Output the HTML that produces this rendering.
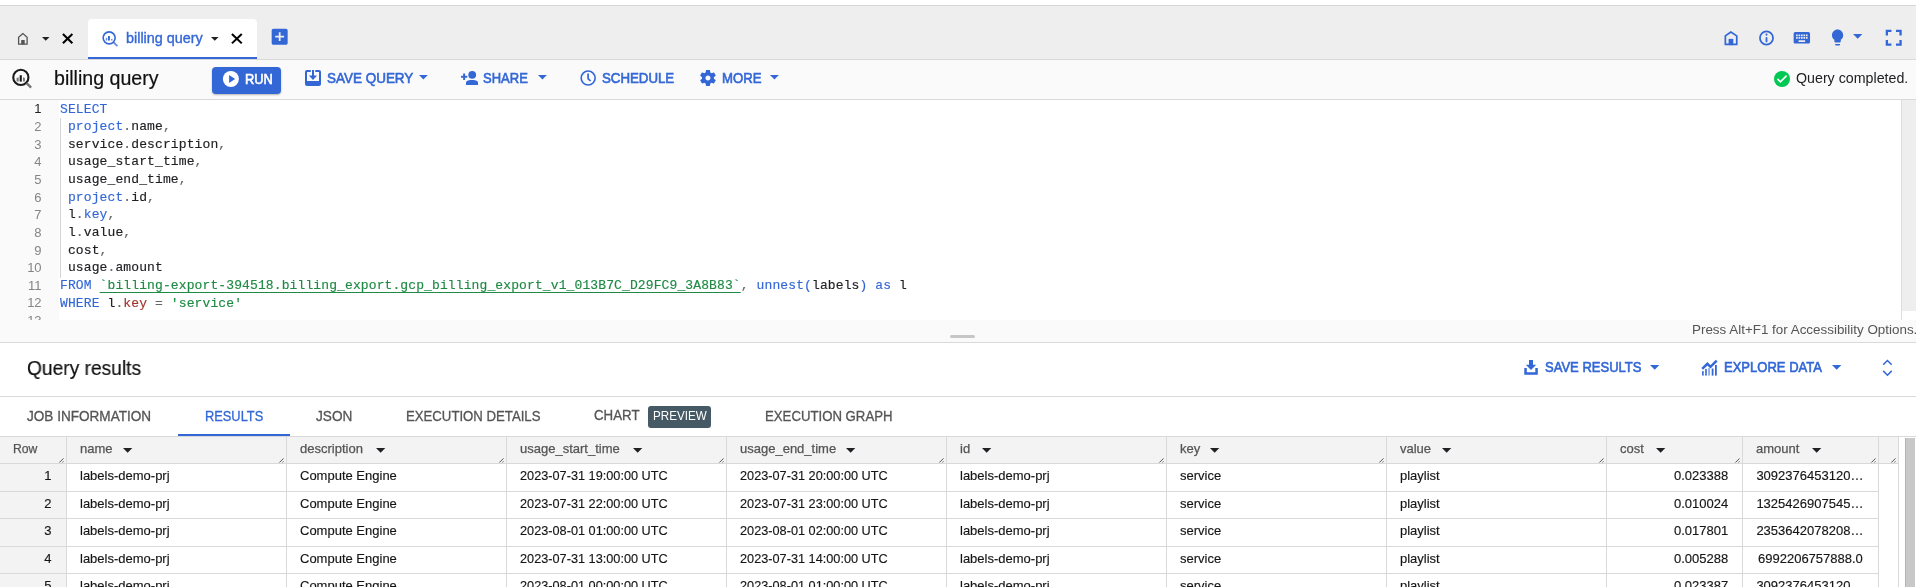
<!DOCTYPE html>
<html><head><meta charset="utf-8">
<style>
*{box-sizing:border-box;margin:0;padding:0}
html,body{width:1916px;height:587px;overflow:hidden;background:#fff;font-family:"Liberation Sans",sans-serif;color:#202124;position:relative;-webkit-font-smoothing:antialiased}
.a{position:absolute;white-space:nowrap}
svg{position:absolute;display:block;overflow:visible}
.mono{font-family:"Liberation Mono",monospace;white-space:pre}
.kw{color:#3367d6}
.str{color:#1e8a44}
.p{color:#666}
.fld{color:#a1342b}
</style></head>
<body>

<div style="position:absolute;left:0;top:0;width:1916px;height:587px;will-change:transform">
<div class="a" style="left:0px;top:0px;width:1916px;height:5px;background:#ffffff;"></div>
<div class="a" style="left:0px;top:5px;width:1916px;height:1px;background:#d4d6da;"></div>
<div class="a" style="left:0px;top:6px;width:1916px;height:53px;background:#eeeeee;"></div>
<div class="a" style="left:0px;top:59px;width:1916px;height:1px;background:#d9d9d9;"></div>
<svg style="left:12.00px;top:28.00px;width:22.00px;height:22.00px" viewBox="0 0 22 22" fill="none" ><path d="M10.9 5.6 L6.6 9.2 V16.1 H15.1 V9.2 Z" fill="none" stroke="#555" stroke-width="1.3" stroke-linejoin="miter"/><rect x="9.2" y="12" width="3.5" height="4.4" fill="#555"/></svg>
<svg style="left:41.20px;top:35.70px;width:9.50px;height:5.75px" viewBox="-1 -1 9.5 5.75" fill="#202124" ><path d="M0 0H7.5L3.75 3.75Z"/></svg>
<svg style="left:62.30px;top:33.30px;width:11.30px;height:11.20px" viewBox="0 0 11.299999999999997 11.200000000000003" fill="none" ><path d="M0.9225 0.9225L10.377499999999998 10.277500000000003M10.377499999999998 0.9225L0.9225 10.277500000000003" stroke="#000" stroke-width="2.05" fill="none"/></svg>
<div class="a" style="left:88px;top:19px;width:169px;height:40px;background:#ffffff;border-radius:4px 4px 0 0"></div>
<div class="a" style="left:88px;top:57px;width:169px;height:2px;background:#3367d6;"></div>
<svg style="left:0.00px;top:0.00px;width:1916.00px;height:587.00px" viewBox="0 0 1916 587" fill="none" ><circle cx="109.15" cy="37.85" r="6.0" fill="none" stroke="#3367d6" stroke-width="1.6"/><path d="M113.75 42.45 L117.45 46.150000000000006" stroke="#3367d6" stroke-width="2" opacity="0.7"/><rect x="108.0" y="36.0" width="1.9" height="4.5" fill="#3367d6"/><rect x="105.80000000000001" y="37.800000000000004" width="1.4" height="2.7" fill="#3367d6" opacity="0.75"/><rect x="111.10000000000001" y="38.9" width="1.4" height="1.6" fill="#3367d6" opacity="0.75"/></svg>
<div class="a" style="left:126.00px;top:31.05px;font-size:14px;line-height:14px;color:#3367d6;-webkit-text-stroke-width:0.35px;transform:scaleX(1.0280);transform-origin:0 0;">billing query</div>
<svg style="left:210.00px;top:36.00px;width:9.60px;height:5.80px" viewBox="-1 -1 9.6 5.8" fill="#202124" ><path d="M0 0H7.6L3.8 3.8Z"/></svg>
<svg style="left:231.00px;top:33.40px;width:11.70px;height:11.30px" viewBox="0 0 11.699999999999989 11.300000000000004" fill="none" ><path d="M0.9225 0.9225L10.77749999999999 10.377500000000005M10.77749999999999 0.9225L0.9225 10.377500000000005" stroke="#000" stroke-width="2.05" fill="none"/></svg>
<svg style="left:269.33px;top:26.33px;width:21.34px;height:21.34px" viewBox="0 0 24 24" fill="#3367d6" ><path d="M19 3H5c-1.11 0-2 .9-2 2v14c0 1.1.89 2 2 2h14c1.1 0 2-.9 2-2V5c0-1.1-.9-2-2-2zm-2 10h-4v4h-2v-4H7v-2h4V7h2v4h4v2z"/></svg>
<svg style="left:1720.00px;top:26.00px;width:22.00px;height:22.00px" viewBox="0 0 22 22" fill="none" ><path d="M10.9 6 L5.35 9.9 V18.45 H16.75 V9.9 Z" fill="none" stroke="#3367d6" stroke-width="1.7"/><rect x="8.6" y="12.9" width="4.7" height="6.2" fill="#3367d6"/></svg>
<svg style="left:0.00px;top:0.00px;width:1916.00px;height:587.00px" viewBox="0 0 1916 587" fill="none" ><circle cx="1766.5" cy="37.95" r="6.55" fill="none" stroke="#3367d6" stroke-width="1.75"/><circle cx="1766.5" cy="34.6" r="1.05" fill="#3367d6"/><rect x="1765.6" y="36.9" width="1.8" height="5.4" rx="0.9" fill="#3367d6"/></svg>
<svg style="left:1792.16px;top:28.20px;width:19.68px;height:19.68px" viewBox="0 0 24 24" fill="#3367d6" ><path d="M20 5H4c-1.1 0-1.99.9-1.99 2L2 17c0 1.1.9 2 2 2h16c1.1 0 2-.9 2-2V7c0-1.1-.9-2-2-2zm-9 3h2v2h-2V8zm0 3h2v2h-2v-2zM8 8h2v2H8V8zm0 3h2v2H8v-2zm-1 2H5v-2h2v2zm0-3H5V8h2v2zm9 7H8v-2h8v2zm0-4h-2v-2h2v2zm0-3h-2V8h2v2zm3 3h-2v-2h2v2zm0-3h-2V8h2v2z"/></svg>
<svg style="left:1828.00px;top:27.60px;width:19.20px;height:19.20px" viewBox="0 0 24 24" fill="#3367d6" ><path d="M9 21c0 .55.45 1 1 1h4c.55 0 1-.45 1-1v-1H9v1zm3-19C8.14 2 5 5.14 5 9c0 2.38 1.19 4.47 3 5.74V17c0 .55.45 1 1 1h6c.55 0 1-.45 1-1v-2.26c1.81-1.27 3-3.36 3-5.74 0-3.86-3.14-7-7-7z"/></svg>
<svg style="left:1852.30px;top:33.00px;width:11.40px;height:6.70px" viewBox="-1 -1 11.4 6.7" fill="#3367d6" ><path d="M0 0H9.4L4.7 4.7Z"/></svg>
<svg style="left:1880.29px;top:24.18px;width:27.43px;height:27.43px" viewBox="0 0 24 24" fill="#3367d6" ><path d="M7 14H5v5h5v-2H7v-3zm-2-4h2V7h3V5H5v5zm12 7h-3v2h5v-5h-2v3zM14 5v2h3v3h2V5h-5z"/></svg>
<div class="a" style="left:0px;top:60px;width:1916px;height:39px;background:#fafafa;"></div>
<div class="a" style="left:0px;top:99px;width:1916px;height:1px;background:#d9d9d9;"></div>
<svg style="left:0.00px;top:0.00px;width:1916.00px;height:587.00px" viewBox="0 0 1916 587" fill="none" ><circle cx="20.85" cy="77.4" r="7.6" fill="none" stroke="#1a1a1a" stroke-width="2.1"/><path d="M26.55 83.10000000000001 L31.150000000000002 87.7" stroke="#777" stroke-width="2.5"/><rect x="19.700000000000003" y="75.2" width="2.1" height="6.4" fill="#1a1a1a"/><path d="M16.6 78.0 L18.700000000000003 77.30000000000001 V81.60000000000001 H16.6 Z" fill="#777"/><path d="M23.0 77.30000000000001 L24.900000000000002 78.0 V81.60000000000001 H23.0 Z" fill="#777"/></svg>
<div class="a" style="left:53.80px;top:68.07px;font-size:20px;line-height:20px;color:#111;-webkit-text-stroke-width:0.2px;transform:scaleX(0.9800);transform-origin:0 0;">billing query</div>
<div class="a" style="left:212px;top:67px;width:69px;height:27px;background:#3367d6;border-radius:4px;box-shadow:0 1px 2px rgba(0,0,0,.28)"></div>
<svg style="left:0.00px;top:0.00px;width:1916.00px;height:587.00px" viewBox="0 0 1916 587" fill="none" ><circle cx="230.9" cy="79" r="8" fill="#fff"/><path d="M229.1 75.1 L235.1 79 L229.1 82.9 Z" fill="#3367d6"/></svg>
<div class="a" style="left:244.50px;top:71.95px;font-size:14px;line-height:14px;color:#fff;-webkit-text-stroke-width:0.6px;transform:scaleX(0.9170);transform-origin:0 0;">RUN</div>
<svg style="left:305.00px;top:70.00px;width:16.00px;height:16.00px" viewBox="0 0 16 16" fill="#3367d6" ><path fill-rule="evenodd" d="M2 0H5.8V2H2V11H14V2H10.3V0H14A2 2 0 0 1 16 2V14A2 2 0 0 1 14 16H2A2 2 0 0 1 0 14V2A2 2 0 0 1 2 0Z"/><rect x="7" y="0" width="2" height="6.4"/><path d="M3.9 5.6H12.1L8 10.1Z"/></svg>
<div class="a" style="left:327.20px;top:70.95px;font-size:14px;line-height:14px;color:#3367d6;-webkit-text-stroke-width:0.6px;transform:scaleX(0.9620);transform-origin:0 0;">SAVE QUERY</div>
<svg style="left:417.60px;top:74.30px;width:10.80px;height:6.40px" viewBox="-1 -1 10.8 6.4" fill="#3367d6" ><path d="M0 0H8.8L4.4 4.4Z"/></svg>
<svg style="left:0.00px;top:0.00px;width:1916.00px;height:587.00px" viewBox="0 0 1916 587" fill="none" ><g fill="#3367d6"><rect x="461" y="75.8" width="6.3" height="1.95"/><rect x="463.15" y="73.5" width="1.95" height="6.5"/><circle cx="472.2" cy="74.85" r="3.9"/><path d="M466 85 V82.6 C466 80.2 470 79.9 472 79.9 C474 79.9 478 80.2 478 82.6 V85 Z"/></g></svg>
<div class="a" style="left:483.40px;top:70.85px;font-size:14px;line-height:14px;color:#3367d6;-webkit-text-stroke-width:0.6px;transform:scaleX(0.9290);transform-origin:0 0;">SHARE</div>
<svg style="left:536.80px;top:74.30px;width:10.90px;height:6.45px" viewBox="-1 -1 10.9 6.45" fill="#3367d6" ><path d="M0 0H8.9L4.45 4.45Z"/></svg>
<svg style="left:0.00px;top:0.00px;width:1916.00px;height:587.00px" viewBox="0 0 1916 587" fill="none" ><circle cx="588.15" cy="78.05" r="7.0" fill="none" stroke="#3367d6" stroke-width="1.6"/><path d="M588.1 73.6 V78.6 L590.6 81" fill="none" stroke="#3367d6" stroke-width="1.7"/></svg>
<div class="a" style="left:601.70px;top:70.85px;font-size:14px;line-height:14px;color:#3367d6;-webkit-text-stroke-width:0.6px;transform:scaleX(0.9470);transform-origin:0 0;">SCHEDULE</div>
<svg style="left:698.24px;top:67.94px;width:19.92px;height:19.92px" viewBox="0 0 24 24" fill="#3367d6" ><path d="M19.14 12.94c.04-.3.06-.61.06-.94 0-.32-.02-.64-.07-.94l2.03-1.58c.18-.14.23-.41.12-.61l-1.92-3.32c-.12-.22-.37-.29-.59-.22l-2.39.96c-.5-.38-1.03-.7-1.62-.94l-.36-2.54c-.04-.24-.24-.41-.48-.41h-3.84c-.24 0-.43.17-.47.41l-.36 2.54c-.59.24-1.13.57-1.62.94l-2.39-.96c-.22-.08-.47 0-.59.22L2.74 8.87c-.12.21-.08.47.12.61l2.03 1.58c-.05.3-.09.63-.09.94s.02.64.07.94l-2.03 1.58c-.18.14-.23.41-.12.61l1.92 3.32c.12.22.37.29.59.22l2.39-.96c.5.38 1.03.7 1.62.94l.36 2.54c.05.24.24.41.48.41h3.84c.24 0 .44-.17.47-.41l.36-2.54c.59-.24 1.13-.56 1.62-.94l2.39.96c.22.08.47 0 .59-.22l1.92-3.32c.12-.22.07-.47-.12-.61l-2.01-1.58zM12 15.05c-1.68 0-3.05-1.37-3.05-3.05s1.37-3.05 3.05-3.05 3.05 1.37 3.05 3.05-1.37 3.05-3.05 3.05z"/></svg>
<div class="a" style="left:722.40px;top:70.85px;font-size:14px;line-height:14px;color:#3367d6;-webkit-text-stroke-width:0.6px;transform:scaleX(0.9390);transform-origin:0 0;">MORE</div>
<svg style="left:769.30px;top:74.30px;width:10.90px;height:6.45px" viewBox="-1 -1 10.9 6.45" fill="#3367d6" ><path d="M0 0H8.9L4.45 4.45Z"/></svg>
<svg style="left:0.00px;top:0.00px;width:1916.00px;height:587.00px" viewBox="0 0 1916 587" fill="none" ><circle cx="1782" cy="79" r="8" fill="#00c853"/><path d="M1777.4 78.9 L1780.4 81.9 L1786.6 75.6" fill="none" stroke="#fff" stroke-width="1.6"/></svg>
<div class="a" style="left:1795.60px;top:71.15px;font-size:14px;line-height:14px;color:#202124;transform:scaleX(1.0160);transform-origin:0 0;">Query completed.</div>
<div class="a" style="left:0px;top:100px;width:59px;height:220px;background:#fafafa;"></div>
<div class="a" style="left:59px;top:100px;width:1842px;height:220px;background:#ffffff;"></div>
<div class="a" style="left:1901px;top:100px;width:1px;height:220px;background:#dddddd;"></div>
<div class="a" style="left:1902px;top:100px;width:14px;height:211px;background:#eeeeee;"></div>
<div class="a" style="left:60px;top:118px;width:1px;height:160px;background:#d3d3d3;"></div>
<div class="a" style="left:0;top:100px;width:1901px;height:220px;overflow:hidden">
<div class="a" style="left:0;top:2.40px;width:41.6px;text-align:right;font-size:13px;line-height:13px;color:#202124">1</div>
<div class="a mono" style="left:60px;top:2.50px;font-size:13px;line-height:13px;letter-spacing:0.114px;color:#202124;-webkit-text-stroke-width:0.15px"><span class="kw">SELECT</span></div>
<div class="a" style="left:0;top:20.04px;width:41.6px;text-align:right;font-size:13px;line-height:13px;color:#858585">2</div>
<div class="a mono" style="left:60px;top:20.14px;font-size:13px;line-height:13px;letter-spacing:0.114px;color:#202124;-webkit-text-stroke-width:0.15px"> <span class="kw">project</span><span class="p">.</span>name<span class="p">,</span></div>
<div class="a" style="left:0;top:37.68px;width:41.6px;text-align:right;font-size:13px;line-height:13px;color:#858585">3</div>
<div class="a mono" style="left:60px;top:37.78px;font-size:13px;line-height:13px;letter-spacing:0.114px;color:#202124;-webkit-text-stroke-width:0.15px"> service<span class="p">.</span>description<span class="p">,</span></div>
<div class="a" style="left:0;top:55.32px;width:41.6px;text-align:right;font-size:13px;line-height:13px;color:#858585">4</div>
<div class="a mono" style="left:60px;top:55.42px;font-size:13px;line-height:13px;letter-spacing:0.114px;color:#202124;-webkit-text-stroke-width:0.15px"> usage_start_time<span class="p">,</span></div>
<div class="a" style="left:0;top:72.96px;width:41.6px;text-align:right;font-size:13px;line-height:13px;color:#858585">5</div>
<div class="a mono" style="left:60px;top:73.06px;font-size:13px;line-height:13px;letter-spacing:0.114px;color:#202124;-webkit-text-stroke-width:0.15px"> usage_end_time<span class="p">,</span></div>
<div class="a" style="left:0;top:90.60px;width:41.6px;text-align:right;font-size:13px;line-height:13px;color:#858585">6</div>
<div class="a mono" style="left:60px;top:90.70px;font-size:13px;line-height:13px;letter-spacing:0.114px;color:#202124;-webkit-text-stroke-width:0.15px"> <span class="kw">project</span><span class="p">.</span>id<span class="p">,</span></div>
<div class="a" style="left:0;top:108.24px;width:41.6px;text-align:right;font-size:13px;line-height:13px;color:#858585">7</div>
<div class="a mono" style="left:60px;top:108.34px;font-size:13px;line-height:13px;letter-spacing:0.114px;color:#202124;-webkit-text-stroke-width:0.15px"> l<span class="p">.</span><span class="kw">key</span><span class="p">,</span></div>
<div class="a" style="left:0;top:125.88px;width:41.6px;text-align:right;font-size:13px;line-height:13px;color:#858585">8</div>
<div class="a mono" style="left:60px;top:125.98px;font-size:13px;line-height:13px;letter-spacing:0.114px;color:#202124;-webkit-text-stroke-width:0.15px"> l<span class="p">.</span>value<span class="p">,</span></div>
<div class="a" style="left:0;top:143.52px;width:41.6px;text-align:right;font-size:13px;line-height:13px;color:#858585">9</div>
<div class="a mono" style="left:60px;top:143.62px;font-size:13px;line-height:13px;letter-spacing:0.114px;color:#202124;-webkit-text-stroke-width:0.15px"> cost<span class="p">,</span></div>
<div class="a" style="left:0;top:161.16px;width:41.6px;text-align:right;font-size:13px;line-height:13px;color:#858585">10</div>
<div class="a mono" style="left:60px;top:161.26px;font-size:13px;line-height:13px;letter-spacing:0.114px;color:#202124;-webkit-text-stroke-width:0.15px"> usage<span class="p">.</span>amount</div>
<div class="a" style="left:0;top:178.80px;width:41.6px;text-align:right;font-size:13px;line-height:13px;color:#858585">11</div>
<div class="a mono" style="left:60px;top:178.90px;font-size:13px;line-height:13px;letter-spacing:0.114px;color:#202124;-webkit-text-stroke-width:0.15px"><span class="kw">FROM</span> <span class="str" style="text-decoration:underline;text-decoration-color:#1e8a44;text-underline-offset:3px">`billing-export-394518.billing_export.gcp_billing_export_v1_013B7C_D29FC9_3A8B83`</span><span class="p">,</span> <span class="kw">unnest(</span>labels<span class="kw">)</span> <span class="kw">as</span> l</div>
<div class="a" style="left:0;top:196.44px;width:41.6px;text-align:right;font-size:13px;line-height:13px;color:#858585">12</div>
<div class="a mono" style="left:60px;top:196.54px;font-size:13px;line-height:13px;letter-spacing:0.114px;color:#202124;-webkit-text-stroke-width:0.15px"><span class="kw">WHERE</span> l<span class="p">.</span><span class="fld">key</span> <span class="p">=</span> <span class="str">'service'</span></div>
<div class="a" style="left:0;top:214.08px;width:41.6px;text-align:right;font-size:13px;line-height:13px;color:#858585">13</div>
<div class="a mono" style="left:60px;top:214.18px;font-size:13px;line-height:13px;letter-spacing:0.114px;color:#202124;-webkit-text-stroke-width:0.15px"></div>
</div>
<div class="a" style="left:0px;top:320px;width:1916px;height:22px;background:#fafafa;"></div>
<div class="a" style="left:0px;top:342px;width:1916px;height:1px;background:#d9d9d9;"></div>
<div class="a" style="left:950px;top:335px;width:25px;height:3px;background:#c6c6c6;border-radius:1.5px"></div>
<div class="a" style="left:1692.30px;top:322.90px;font-size:13px;line-height:13px;color:#555;transform:scaleX(1.0310);transform-origin:0 0;">Press Alt+F1 for Accessibility Options.</div>
<div class="a" style="left:27.30px;top:357.97px;font-size:20px;line-height:20px;color:#111;-webkit-text-stroke-width:0.2px;transform:scaleX(0.9590);transform-origin:0 0;">Query results</div>
<svg style="left:1520.00px;top:355.00px;width:24.00px;height:24.00px" viewBox="0 0 24 24" fill="#3367d6" ><rect x="9" y="5" width="4" height="5.5"/><path d="M5.8 9.7H16.2L11 15.1Z"/><path d="M4.3 13.1H6.8V17.3H15.3V13.1H17.8V19.8H4.3Z"/></svg>
<div class="a" style="left:1544.70px;top:360.05px;font-size:14px;line-height:14px;color:#3367d6;-webkit-text-stroke-width:0.6px;transform:scaleX(0.9300);transform-origin:0 0;">SAVE RESULTS</div>
<svg style="left:1649.40px;top:364.10px;width:11.40px;height:6.70px" viewBox="-1 -1 11.4 6.7" fill="#3367d6" ><path d="M0 0H9.4L4.7 4.7Z"/></svg>
<svg style="left:1698.00px;top:355.00px;width:24.00px;height:24.00px" viewBox="0 0 24 24" fill="#3367d6" ><path d="M4.2 13.9 L9.4 8.8 L12.5 11.9 L18.7 5.7" fill="none" stroke="#3367d6" stroke-width="2.4"/><rect x="4.1" y="16.1" width="1.6" height="4.5"/><rect x="7.2" y="13.9" width="1.6" height="6.7"/><rect x="10.2" y="13.1" width="1.7" height="7.5" opacity="0.6"/><rect x="13.7" y="13.5" width="1.8" height="7.1"/><rect x="17" y="10" width="1.8" height="10.6"/></svg>
<div class="a" style="left:1723.60px;top:359.95px;font-size:14px;line-height:14px;color:#3367d6;-webkit-text-stroke-width:0.6px;transform:scaleX(0.9300);transform-origin:0 0;">EXPLORE DATA</div>
<svg style="left:1830.50px;top:364.00px;width:11.40px;height:6.70px" viewBox="-1 -1 11.4 6.7" fill="#3367d6" ><path d="M0 0H9.4L4.7 4.7Z"/></svg>
<svg style="left:0.00px;top:0.00px;width:1916.00px;height:587.00px" viewBox="0 0 1916 587" fill="none" ><path d="M1883.2 364.8 L1887.45 360.5 L1891.7 364.8 M1883.2 370.9 L1887.45 375.2 L1891.7 370.9" fill="none" stroke="#3367d6" stroke-width="1.5"/></svg>
<div class="a" style="left:0px;top:396px;width:1916px;height:1px;background:#d9d9d9;"></div>
<div class="a" style="left:27.30px;top:409.05px;font-size:14px;line-height:14px;color:#555;-webkit-text-stroke-width:0.3px;transform:scaleX(0.9690);transform-origin:0 0;">JOB INFORMATION</div>
<div class="a" style="left:205.00px;top:409.05px;font-size:14px;line-height:14px;color:#3367d6;-webkit-text-stroke-width:0.3px;transform:scaleX(0.9160);transform-origin:0 0;">RESULTS</div>
<div class="a" style="left:178px;top:434px;width:112px;height:2px;background:#3367d6;"></div>
<div class="a" style="left:316.30px;top:409.05px;font-size:14px;line-height:14px;color:#555;-webkit-text-stroke-width:0.3px;transform:scaleX(0.9730);transform-origin:0 0;">JSON</div>
<div class="a" style="left:405.80px;top:409.05px;font-size:14px;line-height:14px;color:#555;-webkit-text-stroke-width:0.3px;transform:scaleX(0.9410);transform-origin:0 0;">EXECUTION DETAILS</div>
<div class="a" style="left:593.90px;top:408.05px;font-size:14px;line-height:14px;color:#555;-webkit-text-stroke-width:0.3px;transform:scaleX(0.9500);transform-origin:0 0;">CHART</div>
<div class="a" style="left:648px;top:406px;width:63px;height:22px;background:#455a64;border-radius:3px"></div>
<div class="a" style="left:652.70px;top:408.90px;font-size:13px;line-height:13px;color:#fff;transform:scaleX(0.8950);transform-origin:0 0;">PREVIEW</div>
<div class="a" style="left:764.90px;top:409.05px;font-size:14px;line-height:14px;color:#555;-webkit-text-stroke-width:0.3px;transform:scaleX(0.9420);transform-origin:0 0;">EXECUTION GRAPH</div>
<div class="a" style="left:0px;top:436px;width:1916px;height:1px;background:#d9d9d9;"></div>
<div class="a" style="left:0px;top:437px;width:1898px;height:26px;background:#f3f3f3;"></div>
<div class="a" style="left:0px;top:463px;width:1898px;height:1px;background:#d9d9d9;"></div>
<div class="a" style="left:0px;top:464px;width:66px;height:123px;background:#f3f3f3;"></div>
<div class="a" style="left:66px;top:437px;width:1px;height:150px;background:#d9d9d9;"></div>
<div class="a" style="left:286px;top:437px;width:1px;height:150px;background:#d9d9d9;"></div>
<div class="a" style="left:506px;top:437px;width:1px;height:150px;background:#d9d9d9;"></div>
<div class="a" style="left:726px;top:437px;width:1px;height:150px;background:#d9d9d9;"></div>
<div class="a" style="left:946px;top:437px;width:1px;height:150px;background:#d9d9d9;"></div>
<div class="a" style="left:1166px;top:437px;width:1px;height:150px;background:#d9d9d9;"></div>
<div class="a" style="left:1386px;top:437px;width:1px;height:150px;background:#d9d9d9;"></div>
<div class="a" style="left:1606px;top:437px;width:1px;height:150px;background:#d9d9d9;"></div>
<div class="a" style="left:1742px;top:437px;width:1px;height:150px;background:#d9d9d9;"></div>
<div class="a" style="left:1878px;top:437px;width:1px;height:150px;background:#d9d9d9;"></div>
<div class="a" style="left:1898px;top:437px;width:1px;height:150px;background:#d9d9d9;"></div>
<div class="a" style="left:0px;top:491px;width:1878px;height:1px;background:#d9d9d9;"></div>
<div class="a" style="left:0px;top:518px;width:1878px;height:1px;background:#d9d9d9;"></div>
<div class="a" style="left:0px;top:546px;width:1878px;height:1px;background:#d9d9d9;"></div>
<div class="a" style="left:0px;top:573px;width:1878px;height:1px;background:#d9d9d9;"></div>
<div class="a" style="left:12.70px;top:442.10px;font-size:13px;line-height:13px;color:#555;-webkit-text-stroke-width:0.25px;transform:scaleX(0.9400);transform-origin:0 0;">Row</div>
<div class="a" style="left:80.00px;top:442.10px;font-size:13px;line-height:13px;color:#555;-webkit-text-stroke-width:0.25px;">name</div>
<svg style="left:122.40px;top:446.60px;width:11.30px;height:6.65px" viewBox="-1 -1 11.3 6.65" fill="#202124" ><path d="M0 0H9.3L4.65 4.65Z"/></svg>
<div class="a" style="left:300.00px;top:442.10px;font-size:13px;line-height:13px;color:#555;-webkit-text-stroke-width:0.25px;">description</div>
<svg style="left:375.20px;top:446.60px;width:11.30px;height:6.65px" viewBox="-1 -1 11.3 6.65" fill="#202124" ><path d="M0 0H9.3L4.65 4.65Z"/></svg>
<div class="a" style="left:520.00px;top:442.10px;font-size:13px;line-height:13px;color:#555;-webkit-text-stroke-width:0.25px;">usage_start_time</div>
<svg style="left:631.90px;top:446.60px;width:11.30px;height:6.65px" viewBox="-1 -1 11.3 6.65" fill="#202124" ><path d="M0 0H9.3L4.65 4.65Z"/></svg>
<div class="a" style="left:740.00px;top:442.10px;font-size:13px;line-height:13px;color:#555;-webkit-text-stroke-width:0.25px;">usage_end_time</div>
<svg style="left:845.40px;top:446.60px;width:11.30px;height:6.65px" viewBox="-1 -1 11.3 6.65" fill="#202124" ><path d="M0 0H9.3L4.65 4.65Z"/></svg>
<div class="a" style="left:960.00px;top:442.10px;font-size:13px;line-height:13px;color:#555;-webkit-text-stroke-width:0.25px;">id</div>
<svg style="left:980.70px;top:446.60px;width:11.30px;height:6.65px" viewBox="-1 -1 11.3 6.65" fill="#202124" ><path d="M0 0H9.3L4.65 4.65Z"/></svg>
<div class="a" style="left:1180.00px;top:442.10px;font-size:13px;line-height:13px;color:#555;-webkit-text-stroke-width:0.25px;">key</div>
<svg style="left:1209.00px;top:446.60px;width:11.30px;height:6.65px" viewBox="-1 -1 11.3 6.65" fill="#202124" ><path d="M0 0H9.3L4.65 4.65Z"/></svg>
<div class="a" style="left:1400.00px;top:442.10px;font-size:13px;line-height:13px;color:#555;-webkit-text-stroke-width:0.25px;">value</div>
<svg style="left:1440.70px;top:446.60px;width:11.30px;height:6.65px" viewBox="-1 -1 11.3 6.65" fill="#202124" ><path d="M0 0H9.3L4.65 4.65Z"/></svg>
<div class="a" style="left:1620.00px;top:442.10px;font-size:13px;line-height:13px;color:#555;-webkit-text-stroke-width:0.25px;">cost</div>
<svg style="left:1655.40px;top:446.60px;width:11.30px;height:6.65px" viewBox="-1 -1 11.3 6.65" fill="#202124" ><path d="M0 0H9.3L4.65 4.65Z"/></svg>
<div class="a" style="left:1756.00px;top:442.10px;font-size:13px;line-height:13px;color:#555;-webkit-text-stroke-width:0.25px;">amount</div>
<svg style="left:1811.00px;top:446.60px;width:11.30px;height:6.65px" viewBox="-1 -1 11.3 6.65" fill="#202124" ><path d="M0 0H9.3L4.65 4.65Z"/></svg>
<svg style="left:0.00px;top:0.00px;width:1916.00px;height:587.00px" viewBox="0 0 1916 587" fill="none" ><path d="M59.4 462.5 L63.5 458.4 M62.3 462.5 L63.5 461.3 M279.4 462.5 L283.5 458.4 M282.3 462.5 L283.5 461.3 M499.4 462.5 L503.5 458.4 M502.3 462.5 L503.5 461.3 M719.4 462.5 L723.5 458.4 M722.3 462.5 L723.5 461.3 M939.4 462.5 L943.5 458.4 M942.3 462.5 L943.5 461.3 M1159.4 462.5 L1163.5 458.4 M1162.3 462.5 L1163.5 461.3 M1379.4 462.5 L1383.5 458.4 M1382.3 462.5 L1383.5 461.3 M1599.4 462.5 L1603.5 458.4 M1602.3 462.5 L1603.5 461.3 M1735.4 462.5 L1739.5 458.4 M1738.3 462.5 L1739.5 461.3 M1871.4 462.5 L1875.5 458.4 M1874.3 462.5 L1875.5 461.3 M1891.4 462.5 L1895.5 458.4 M1894.3 462.5 L1895.5 461.3 " stroke="#555" stroke-width="1"/></svg>
<div class="a" style="left:0;width:51.4px;text-align:right;top:468.90px;font-size:13px;line-height:13px;color:#151515;-webkit-text-stroke-width:0.15px">1</div>
<div class="a" style="left:80.00px;top:468.90px;font-size:13px;line-height:13px;color:#151515;-webkit-text-stroke-width:0.15px;">labels-demo-prj</div>
<div class="a" style="left:300.00px;top:468.90px;font-size:13px;line-height:13px;color:#151515;-webkit-text-stroke-width:0.15px;">Compute Engine</div>
<div class="a" style="left:520.00px;top:468.90px;font-size:13px;line-height:13px;color:#151515;-webkit-text-stroke-width:0.15px;transform:scaleX(0.9780);transform-origin:0 0;">2023-07-31 19:00:00 UTC</div>
<div class="a" style="left:740.00px;top:468.90px;font-size:13px;line-height:13px;color:#151515;-webkit-text-stroke-width:0.15px;transform:scaleX(0.9780);transform-origin:0 0;">2023-07-31 20:00:00 UTC</div>
<div class="a" style="left:960.00px;top:468.90px;font-size:13px;line-height:13px;color:#151515;-webkit-text-stroke-width:0.15px;">labels-demo-prj</div>
<div class="a" style="left:1180.00px;top:468.90px;font-size:13px;line-height:13px;color:#151515;-webkit-text-stroke-width:0.15px;">service</div>
<div class="a" style="left:1400.00px;top:468.90px;font-size:13px;line-height:13px;color:#151515;-webkit-text-stroke-width:0.15px;">playlist</div>
<div class="a" style="left:1606px;width:122.2px;text-align:right;top:468.90px;font-size:13px;line-height:13px;color:#151515;-webkit-text-stroke-width:0.15px">0.023388</div>
<div class="a" style="left:1756.40px;top:468.90px;font-size:13px;line-height:13px;color:#151515;-webkit-text-stroke-width:0.15px;">3092376453120&#8230;</div>
<div class="a" style="left:0;width:51.4px;text-align:right;top:497.00px;font-size:13px;line-height:13px;color:#151515;-webkit-text-stroke-width:0.15px">2</div>
<div class="a" style="left:80.00px;top:497.00px;font-size:13px;line-height:13px;color:#151515;-webkit-text-stroke-width:0.15px;">labels-demo-prj</div>
<div class="a" style="left:300.00px;top:497.00px;font-size:13px;line-height:13px;color:#151515;-webkit-text-stroke-width:0.15px;">Compute Engine</div>
<div class="a" style="left:520.00px;top:497.00px;font-size:13px;line-height:13px;color:#151515;-webkit-text-stroke-width:0.15px;transform:scaleX(0.9780);transform-origin:0 0;">2023-07-31 22:00:00 UTC</div>
<div class="a" style="left:740.00px;top:497.00px;font-size:13px;line-height:13px;color:#151515;-webkit-text-stroke-width:0.15px;transform:scaleX(0.9780);transform-origin:0 0;">2023-07-31 23:00:00 UTC</div>
<div class="a" style="left:960.00px;top:497.00px;font-size:13px;line-height:13px;color:#151515;-webkit-text-stroke-width:0.15px;">labels-demo-prj</div>
<div class="a" style="left:1180.00px;top:497.00px;font-size:13px;line-height:13px;color:#151515;-webkit-text-stroke-width:0.15px;">service</div>
<div class="a" style="left:1400.00px;top:497.00px;font-size:13px;line-height:13px;color:#151515;-webkit-text-stroke-width:0.15px;">playlist</div>
<div class="a" style="left:1606px;width:122.2px;text-align:right;top:497.00px;font-size:13px;line-height:13px;color:#151515;-webkit-text-stroke-width:0.15px">0.010024</div>
<div class="a" style="left:1756.40px;top:497.00px;font-size:13px;line-height:13px;color:#151515;-webkit-text-stroke-width:0.15px;">1325426907545&#8230;</div>
<div class="a" style="left:0;width:51.4px;text-align:right;top:524.10px;font-size:13px;line-height:13px;color:#151515;-webkit-text-stroke-width:0.15px">3</div>
<div class="a" style="left:80.00px;top:524.10px;font-size:13px;line-height:13px;color:#151515;-webkit-text-stroke-width:0.15px;">labels-demo-prj</div>
<div class="a" style="left:300.00px;top:524.10px;font-size:13px;line-height:13px;color:#151515;-webkit-text-stroke-width:0.15px;">Compute Engine</div>
<div class="a" style="left:520.00px;top:524.10px;font-size:13px;line-height:13px;color:#151515;-webkit-text-stroke-width:0.15px;transform:scaleX(0.9780);transform-origin:0 0;">2023-08-01 01:00:00 UTC</div>
<div class="a" style="left:740.00px;top:524.10px;font-size:13px;line-height:13px;color:#151515;-webkit-text-stroke-width:0.15px;transform:scaleX(0.9780);transform-origin:0 0;">2023-08-01 02:00:00 UTC</div>
<div class="a" style="left:960.00px;top:524.10px;font-size:13px;line-height:13px;color:#151515;-webkit-text-stroke-width:0.15px;">labels-demo-prj</div>
<div class="a" style="left:1180.00px;top:524.10px;font-size:13px;line-height:13px;color:#151515;-webkit-text-stroke-width:0.15px;">service</div>
<div class="a" style="left:1400.00px;top:524.10px;font-size:13px;line-height:13px;color:#151515;-webkit-text-stroke-width:0.15px;">playlist</div>
<div class="a" style="left:1606px;width:122.2px;text-align:right;top:524.10px;font-size:13px;line-height:13px;color:#151515;-webkit-text-stroke-width:0.15px">0.017801</div>
<div class="a" style="left:1756.40px;top:524.10px;font-size:13px;line-height:13px;color:#151515;-webkit-text-stroke-width:0.15px;">2353642078208&#8230;</div>
<div class="a" style="left:0;width:51.4px;text-align:right;top:551.90px;font-size:13px;line-height:13px;color:#151515;-webkit-text-stroke-width:0.15px">4</div>
<div class="a" style="left:80.00px;top:551.90px;font-size:13px;line-height:13px;color:#151515;-webkit-text-stroke-width:0.15px;">labels-demo-prj</div>
<div class="a" style="left:300.00px;top:551.90px;font-size:13px;line-height:13px;color:#151515;-webkit-text-stroke-width:0.15px;">Compute Engine</div>
<div class="a" style="left:520.00px;top:551.90px;font-size:13px;line-height:13px;color:#151515;-webkit-text-stroke-width:0.15px;transform:scaleX(0.9780);transform-origin:0 0;">2023-07-31 13:00:00 UTC</div>
<div class="a" style="left:740.00px;top:551.90px;font-size:13px;line-height:13px;color:#151515;-webkit-text-stroke-width:0.15px;transform:scaleX(0.9780);transform-origin:0 0;">2023-07-31 14:00:00 UTC</div>
<div class="a" style="left:960.00px;top:551.90px;font-size:13px;line-height:13px;color:#151515;-webkit-text-stroke-width:0.15px;">labels-demo-prj</div>
<div class="a" style="left:1180.00px;top:551.90px;font-size:13px;line-height:13px;color:#151515;-webkit-text-stroke-width:0.15px;">service</div>
<div class="a" style="left:1400.00px;top:551.90px;font-size:13px;line-height:13px;color:#151515;-webkit-text-stroke-width:0.15px;">playlist</div>
<div class="a" style="left:1606px;width:122.2px;text-align:right;top:551.90px;font-size:13px;line-height:13px;color:#151515;-webkit-text-stroke-width:0.15px">0.005288</div>
<div class="a" style="left:1758.00px;top:551.90px;font-size:13px;line-height:13px;color:#151515;-webkit-text-stroke-width:0.15px;">6992206757888.0</div>
<div class="a" style="left:0;width:51.4px;text-align:right;top:578.60px;font-size:13px;line-height:13px;color:#151515;-webkit-text-stroke-width:0.15px">5</div>
<div class="a" style="left:80.00px;top:578.60px;font-size:13px;line-height:13px;color:#151515;-webkit-text-stroke-width:0.15px;">labels-demo-prj</div>
<div class="a" style="left:300.00px;top:578.60px;font-size:13px;line-height:13px;color:#151515;-webkit-text-stroke-width:0.15px;">Compute Engine</div>
<div class="a" style="left:520.00px;top:578.60px;font-size:13px;line-height:13px;color:#151515;-webkit-text-stroke-width:0.15px;transform:scaleX(0.9780);transform-origin:0 0;">2023-08-01 00:00:00 UTC</div>
<div class="a" style="left:740.00px;top:578.60px;font-size:13px;line-height:13px;color:#151515;-webkit-text-stroke-width:0.15px;transform:scaleX(0.9780);transform-origin:0 0;">2023-08-01 01:00:00 UTC</div>
<div class="a" style="left:960.00px;top:578.60px;font-size:13px;line-height:13px;color:#151515;-webkit-text-stroke-width:0.15px;">labels-demo-prj</div>
<div class="a" style="left:1180.00px;top:578.60px;font-size:13px;line-height:13px;color:#151515;-webkit-text-stroke-width:0.15px;">service</div>
<div class="a" style="left:1400.00px;top:578.60px;font-size:13px;line-height:13px;color:#151515;-webkit-text-stroke-width:0.15px;">playlist</div>
<div class="a" style="left:1606px;width:122.2px;text-align:right;top:578.60px;font-size:13px;line-height:13px;color:#151515;-webkit-text-stroke-width:0.15px">0.023387</div>
<div class="a" style="left:1756.40px;top:578.60px;font-size:13px;line-height:13px;color:#151515;-webkit-text-stroke-width:0.15px;">3092376453120&#8230;</div>
<div class="a" style="left:1905px;top:438px;width:10px;height:149px;background:#c8c8c8;border-left:1px solid #b4b4b4"></div>
</div></body></html>
